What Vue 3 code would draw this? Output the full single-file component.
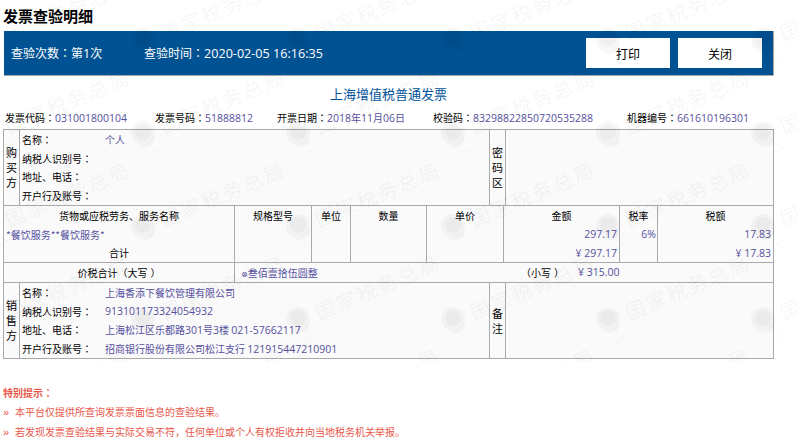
<script setup>
const buyerRows = [
  { label: '名称', value: '个人' },
  { label: '纳税人识别号', value: '' },
  { label: '地址、电话', value: '' },
  { label: '开户行及账号', value: '' }
]

const infoHead = [
  { label: '发票代码', value: '031001800104', width: 150 },
  { label: '发票号码', value: '51888812', width: 122 }
]

const infoTail = [
  { label: '校验码', value: '83298822850720535288', width: 194 },
  { label: '机器编号', value: '661610196301', width: 140 }
]

const goodsCols = [
  { width: 231, rows: ['货物或应税劳务、服务名称', '', '合计'] },
  { width: 77, rows: ['规格型号', '', ''] },
  { width: 39, rows: ['单位', '', ''] },
  { width: 76, rows: ['数量', '', ''] },
  { width: 77, rows: ['单价', '', ''] }
]

const tiles = Array.from({ length: 30 }, (_, i) => i)
</script>

<template>
  <div class="page">
    <h2 class="page-title">发票查验明细</h2>

    <div class="band">
      <div class="band-text band-count">查验次数<span class="colon">：</span>第<span class="num">1</span>次</div>
      <div class="band-text">查验时间<span class="colon">：</span><span class="num">2020-02-05 16:16:35</span></div>
      <div class="band-btns">
        <button class="btn">打印</button>
        <button class="btn">关闭</button>
      </div>
    </div>

    <h3 class="doc-title">上海增值税普通发票</h3>

    <div class="info">
      <div v-for="item in infoHead" :key="item.label" class="info-item" :style="{ width: item.width + 'px' }">
        {{ item.label }}<span class="colon">：</span><span class="val num">{{ item.value }}</span>
      </div>
      <div class="info-item info-date">
        开票日期<span class="colon">：</span><span class="val"><span class="num">2018</span>年<span class="num">11</span>月<span class="num">06</span>日</span>
      </div>
      <div v-for="item in infoTail" :key="item.label" class="info-item" :style="{ width: item.width + 'px' }">
        {{ item.label }}<span class="colon">：</span><span class="val num">{{ item.value }}</span>
      </div>
    </div>

    <div class="invoice">
      <div class="party">
        <div class="side">购买方</div>
        <div class="party-rows">
          <div v-for="row in buyerRows" :key="row.label" class="party-row">
            <span class="party-label">{{ row.label }}<span class="colon">：</span></span>
            <span class="val">{{ row.value }}</span>
          </div>
        </div>
        <div class="side">密码区</div>
        <div class="party-end"></div>
      </div>

      <div class="goods">
        <div v-for="col in goodsCols" :key="col.rows[0]" class="goods-col" :style="{ width: col.width + 'px' }">
          <div v-for="(text, i) in col.rows" :key="i" class="goods-line">{{ text }}</div>
          <div v-if="col.rows[0].length > 8" class="goods-name val">*餐饮服务**餐饮服务*</div>
        </div>
        <div class="goods-col money" style="width: 116px">
          <div class="goods-line">金额</div>
          <div class="goods-line val num">297.17</div>
          <div class="goods-line val num">¥ 297.17</div>
        </div>
        <div class="goods-col money rate" style="width: 38px">
          <div class="goods-line">税率</div>
          <div class="goods-line val num">6%</div>
          <div class="goods-line"></div>
        </div>
        <div class="goods-col money last" style="width: 115px">
          <div class="goods-line">税额</div>
          <div class="goods-line val num">17.83</div>
          <div class="goods-line val num">¥ 17.83</div>
        </div>
      </div>

      <div class="total">
        <div class="total-label">价税合计（<span class="paren-gap">大写</span>）</div>
        <div class="total-value">
          <span class="total-upper val"><span class="circle">⊗</span>叁佰壹拾伍圆整</span>
          <span class="total-small">（<span class="paren-gap">小写</span>）</span>
          <span class="val num">¥ 315.00</span>
        </div>
      </div>

      <div class="party seller">
        <div class="side">销售方</div>
        <div class="party-rows">
          <div class="party-row"><span class="party-label">名称<span class="colon">：</span></span><span class="val">上海香添下餐饮管理有限公司</span></div>
          <div class="party-row"><span class="party-label">纳税人识别号<span class="colon">：</span></span><span class="val num">913101173324054932</span></div>
          <div class="party-row"><span class="party-label">地址、电话<span class="colon">：</span></span><span class="val">上海松江区乐都路<span class="num">301</span>号<span class="num">3</span>楼 <span class="num">021-57662117</span></span></div>
          <div class="party-row"><span class="party-label">开户行及账号<span class="colon">：</span></span><span class="val">招商银行股份有限公司松江支行 <span class="num">121915447210901</span></span></div>
        </div>
        <div class="side">备注</div>
        <div class="party-end"></div>
      </div>
    </div>

    <div class="tips">
      <div class="tips-title">特别提示<span class="colon">：</span></div>
      <div class="tip"><span class="tip-mark">»</span>本平台仅提供所查询发票票面信息的查验结果。</div>
      <div class="tip"><span class="tip-mark">»</span>若发现发票查验结果与实际交易不符，任何单位或个人有权拒收并向当地税务机关举报。</div>
    </div>

    <!-- watermark sits over the page, it also darkens the blue band -->
    <div class="watermark">
      <div class="wm-grid">
        <div v-for="n in tiles" :key="n" class="wm-tile">
          <svg class="wm-emblem" width="32" height="32" viewBox="0 0 32 32">
            <circle cx="14" cy="13" r="12" fill="currentColor" fill-opacity="0.6" />
            <circle cx="14" cy="12" r="8" fill="currentColor" fill-opacity="0.5" />
            <path d="M4 22c7 7 16 3 22-7l-1 8c-6 6-14 6-21-1z" fill="currentColor" fill-opacity="0.5" />
          </svg>
          <span class="wm-text">国家税务总局</span>
          <span class="wm-small">中国税务</span>
        </div>
      </div>
    </div>
  </div>
</template>

<style>
body {
  background: #fff;
}
</style>

<style scoped>
.page {
  position: relative;
  width: 798px;
  height: 448px;
  overflow: hidden;
  font-family: "Noto Sans CJK SC", "Liberation Sans", sans-serif;
  font-size: 10px;
  color: #000;
}

.num {
  font-family: "Open Sans", "Liberation Sans", sans-serif;
  font-size: 1.05em;
}

/* TC cut of the font centres the fullwidth colon like the original */
.colon {
  font-family: "Noto Sans CJK TC", sans-serif;
}

.val {
  color: #56509f;
}

.page-title {
  margin: 0;
  padding-left: 3px;
  height: 31px;
  line-height: 31px;
  font-size: 15px;
  font-weight: bold;
}

.band {
  display: flex;
  align-items: center;
  width: 762px;
  height: 44px;
  margin-left: 4px;
  padding-left: 7px;
  background: #015293;
  border-right: 1px solid #aaa;
  border-bottom: 1px solid #aaa;
}

.band-text {
  font-size: 12px;
  color: #fff;
}

.band-count {
  width: 133px;
}

.band-btns {
  display: flex;
  gap: 8px;
  margin-left: auto;
  margin-right: 11px;
}

.btn {
  width: 84px;
  height: 30px;
  padding: 0;
  border: none;
  background: #fff;
  font-family: inherit;
  font-size: 12px;
  color: #000;
}

.doc-title {
  margin: 0;
  width: 777px;
  height: 36px;
  line-height: 36px;
  text-align: center;
  font-size: 13px;
  font-weight: normal;
  color: #00529c;
}

.info {
  display: flex;
  height: 12px;
  line-height: 12px;
  padding-left: 5px;
  margin-bottom: 5px;
  white-space: nowrap;
}

.info-date {
  width: 156px;
}

.invoice {
  width: 769px;
  margin-left: 3px;
  background: #fafafa;
  border: 1px solid #aaa;
  border-bottom: none;
}

.party {
  display: flex;
  height: 76px;
  box-sizing: border-box;
  border-bottom: 1px solid #aaa;
}

.side {
  display: flex;
  align-items: center;
  justify-content: center;
  width: 16px;
  padding: 0 3px;
  box-sizing: border-box;
  border-right: 1px solid #aaa;
  line-height: 15px;
  font-size: 11px;
  text-align: center;
}

.party-rows {
  display: grid;
  grid-template-rows: repeat(4, 1fr);
  width: 470px;
  box-sizing: border-box;
  padding-left: 2px;
  border-right: 1px solid #aaa;
}

.party-row {
  display: flex;
  align-items: center;
}

.party-label {
  width: 83px;
  flex: none;
}

.party-end {
  flex: 1;
}

.goods {
  display: flex;
  height: 57px;
  box-sizing: border-box;
  border-bottom: 1px solid #aaa;
}

.goods-col {
  position: relative;
  display: grid;
  grid-template-rows: repeat(3, 1fr);
  box-sizing: border-box;
  border-right: 1px solid #aaa;
  text-align: center;
}

.goods-line {
  line-height: 19px;
}

.goods-name {
  position: absolute;
  left: 2px;
  top: 19px;
  line-height: 19px;
}

.money .val {
  padding-right: 2px;
  text-align: right;
}

.rate .val {
  padding-right: 1px;
}

.last {
  border-right: none;
}

.total {
  display: flex;
  height: 20px;
  box-sizing: border-box;
  border-bottom: 1px solid #aaa;
  line-height: 19px;
}

.total-label {
  width: 231px;
  box-sizing: border-box;
  border-right: 1px solid #aaa;
  text-align: center;
}

.paren-gap {
  margin-right: 3px;
}

.total-value {
  display: flex;
  padding-left: 6px;
}

.total-upper {
  width: 280px;
}

.circle {
  font-size: 8px;
  font-family: "DejaVu Sans", sans-serif;
}

.total-small {
  width: 57px;
}

.tips {
  margin-top: 24px;
  padding-left: 3px;
  line-height: 19px;
  color: #e8574a;
}

.tips-title {
  font-weight: bold;
}

.tip-mark {
  display: inline-block;
  width: 12px;
  font-family: "Liberation Sans", sans-serif;
  font-size: 11px;
}

.watermark {
  position: absolute;
  left: 0;
  top: 0;
  width: 100%;
  height: 362px;
  overflow: hidden;
  pointer-events: none;
  color: rgba(0, 0, 0, 0.055);
}

.wm-grid {
  display: grid;
  grid-template-columns: repeat(6, 155px);
  grid-auto-rows: 93px;
  margin-left: -12px;
  margin-top: 40px;
}

.wm-tile {
  position: relative;
}

.wm-emblem {
  position: absolute;
  left: -14px;
  top: -13px;
}

.wm-text {
  position: absolute;
  left: 18px;
  top: -18px;
  line-height: 24px;
  font-size: 20px;
  letter-spacing: 2.3px;
  white-space: nowrap;
  transform: rotate(-22.7deg);
  transform-origin: left center;
}

.wm-small {
  position: absolute;
  left: 0;
  top: 16px;
  line-height: 8px;
  font-size: 6px;
  white-space: nowrap;
  transform: rotate(-30deg);
}
</style>
